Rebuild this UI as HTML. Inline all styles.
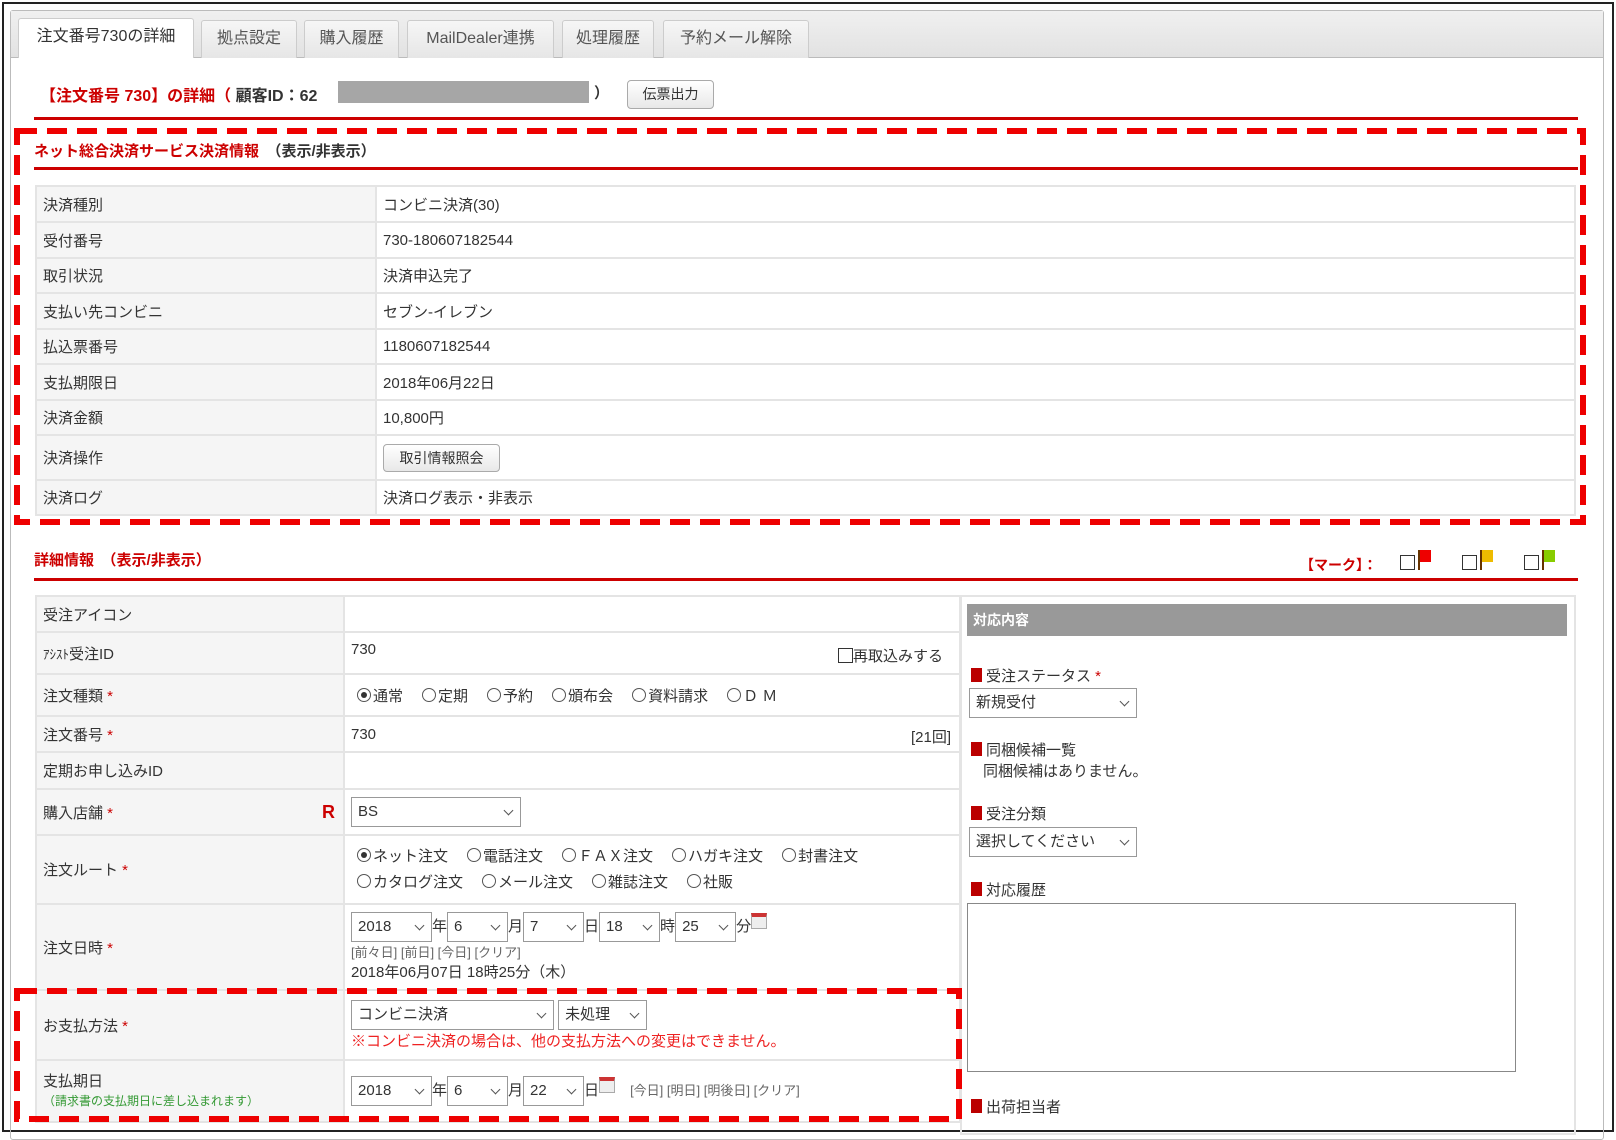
<!DOCTYPE html><html><head><meta charset="utf-8"><style>
*{margin:0;padding:0;box-sizing:border-box}
body{width:1616px;height:1125px;background:#fff;position:relative;overflow:hidden;font-family:"Liberation Sans","Noto Sans CJK JP",sans-serif;font-size:15px;color:#333}
.a{position:absolute;white-space:nowrap}
.frame{left:2px;top:2px;width:1612px;height:1130px;border:2px solid #222}
.inner{left:10px;top:10px;width:1594px;height:1130px;border:1px solid #bbb;border-radius:3px}
.tabbar{left:11px;top:11px;width:1592px;height:47px;background:linear-gradient(#f0f0f0,#e2e2e2);border-bottom:1px solid #bbb}
.tab{position:absolute;top:20px;height:38px;border:1px solid #ccc;border-bottom:none;background:linear-gradient(#f6f6f6,#e6e6e6);border-radius:3px 3px 0 0;text-align:center;line-height:36px;font-size:16px;color:#555}
.tab.on{background:#fff;height:40px;top:18px;color:#333}
.red{color:#c00}
.rl{height:3px;background:#c00}
table{border-collapse:collapse;position:absolute}
td{border:2px solid #e4e4e4;padding:0 6px;font-size:15px;vertical-align:middle}
td.l{background:#f5f5f5}
.sel{display:inline-block;border:1px solid #999;height:30px;line-height:28px;padding:0 6px;font-size:15px;background:#fff;position:relative;vertical-align:middle}
.sel:after{content:"";position:absolute;right:8px;top:9px;width:6px;height:6px;border-right:1px solid #555;border-bottom:1px solid #555;transform:rotate(45deg)}
.rd{display:inline-block;width:14px;height:14px;border:1px solid #555;border-radius:50%;vertical-align:-1px;margin-right:2px;position:relative}
.rd.on:after{content:"";position:absolute;left:3px;top:3px;width:6px;height:6px;border-radius:50%;background:#333}
.cb{display:inline-block;width:15px;height:15px;border:1px solid #333;vertical-align:-2px}
.st{color:#c00}
.sq{display:inline-block;width:11px;height:14px;background:#b00;margin-right:4px;vertical-align:-1px}
.cal{display:inline-block;width:16px;height:16px;border:1px solid #aaa;border-top:4px solid #c33;background:#eee;vertical-align:2px}
.sm{font-size:13px;color:#666}
.btn{border:1px solid #aaa;border-radius:4px;background:linear-gradient(#fff,#e8e8e8);font-size:14px;text-align:center}
.g{margin-right:19px}
.fl{display:inline-block;width:13px;height:20px;border-left:2px solid #630;vertical-align:-2px;position:relative;margin-left:3px}
.fl i{position:absolute;left:0;top:0;width:11px;height:12px}
</style></head><body>
<div class="a frame"></div>
<div class="a inner"></div>
<div class="a tabbar"></div>
<div class="a tab on" style="left:18px;width:176px">注文番号730の詳細</div>
<div class="a tab" style="left:201px;width:96px">拠点設定</div>
<div class="a tab" style="left:304px;width:95px">購入履歴</div>
<div class="a tab" style="left:407px;width:147px">MailDealer連携</div>
<div class="a tab" style="left:562px;width:92px">処理履歴</div>
<div class="a tab" style="left:663px;width:146px">予約メール解除</div>

<div class="a" style="left:40px;top:82px;font-weight:bold;font-size:16px"><span class="red">【注文番号 730】の詳細（</span> 顧客ID：62</div>
<div class="a" style="left:338px;top:81px;width:251px;height:22px;background:#a6a6a6"></div>
<div class="a" style="left:594px;top:82px;font-weight:bold">）</div>
<div class="a btn" style="left:627px;top:80px;width:87px;height:29px;line-height:27px">伝票出力</div>
<div class="a rl" style="left:34px;top:117px;width:1544px"></div>

<div class="a" style="left:34px;top:140px;font-weight:bold;font-size:15px"><span class="red">ネット総合決済サービス決済情報</span>　（表示/非表示）</div>
<div class="a rl" style="left:34px;top:167px;width:1544px"></div>
<table style="left:35px;top:185px;width:1541px">
<col style="width:340px"><col>
<tr style="height:36px"><td class="l">決済種別</td><td>コンビニ決済(30)</td></tr>
<tr style="height:36px"><td class="l">受付番号</td><td>730-180607182544</td></tr>
<tr style="height:35px"><td class="l">取引状況</td><td>決済申込完了</td></tr>
<tr style="height:36px"><td class="l">支払い先コンビニ</td><td>セブン-イレブン</td></tr>
<tr style="height:35px"><td class="l">払込票番号</td><td>1180607182544</td></tr>
<tr style="height:36px"><td class="l">支払期限日</td><td>2018年06月22日</td></tr>
<tr style="height:35px"><td class="l">決済金額</td><td>10,800円</td></tr>
<tr style="height:45px"><td class="l">決済操作</td><td><span class="btn" style="display:inline-block;width:117px;height:28px;line-height:26px">取引情報照会</span></td></tr>
<tr style="height:35px"><td class="l">決済ログ</td><td>決済ログ表示・非表示</td></tr>
</table>

<div class="a" style="left:34px;top:549px;font-weight:bold;font-size:15px"><span class="red">詳細情報</span>　<span class="red">（表示/非表示）</span></div>
<div class="a" style="left:1300px;top:555px;font-weight:bold;font-size:14px"><span class="red">【マーク】：</span></div>
<div class="a" style="left:1400px;top:550px"><span class="cb"></span><span class="fl"><i style="background:#e00"></i></span></div>
<div class="a" style="left:1462px;top:550px"><span class="cb"></span><span class="fl"><i style="background:#eb0"></i></span></div>
<div class="a" style="left:1524px;top:550px"><span class="cb"></span><span class="fl"><i style="background:#8c0"></i></span></div>
<div class="a rl" style="left:34px;top:578px;width:1544px"></div>

<table style="left:35px;top:595px;width:926px">
<col style="width:308px"><col>
<tr style="height:36px"><td class="l">受注アイコン</td><td></td></tr>
<tr style="height:42px"><td class="l"><span style="font-size:13px">ｱｼｽﾄ</span>受注ID</td><td style="position:relative"><span style="position:relative;top:-4px">730</span><span style="position:absolute;right:16px;top:12px"><span class="cb"></span>再取込みする</span></td></tr>
<tr style="height:42px"><td class="l">注文種類 <span class="st">*</span></td><td style="padding-left:12px"><span class="g"><span class="rd on"></span>通常</span><span class="g"><span class="rd"></span>定期</span><span class="g"><span class="rd"></span>予約</span><span class="g"><span class="rd"></span>頒布会</span><span class="g"><span class="rd"></span>資料請求</span><span><span class="rd"></span>Ｄ Ｍ</span></td></tr>
<tr style="height:36px"><td class="l">注文番号 <span class="st">*</span></td><td style="position:relative">730<span style="position:absolute;right:8px">[21回]</span></td></tr>
<tr style="height:37px"><td class="l">定期お申し込みID</td><td></td></tr>
<tr style="height:46px"><td class="l" style="position:relative">購入店舗 <span class="st">*</span><span style="position:absolute;right:8px;top:12px;color:#c00;font-weight:bold;font-size:18px">R</span></td><td><span class="sel" style="width:170px">BS</span></td></tr>
<tr style="height:69px"><td class="l">注文ルート <span class="st">*</span></td><td style="padding-left:12px;line-height:26px"><span class="g"><span class="rd on"></span>ネット注文</span><span class="g"><span class="rd"></span>電話注文</span><span class="g"><span class="rd"></span>ＦＡＸ注文</span><span class="g"><span class="rd"></span>ハガキ注文</span><span><span class="rd"></span>封書注文</span><br><span class="g"><span class="rd"></span>カタログ注文</span><span class="g"><span class="rd"></span>メール注文</span><span class="g"><span class="rd"></span>雑誌注文</span><span><span class="rd"></span>社販</span></td></tr>
<tr style="height:86px"><td class="l">注文日時 <span class="st">*</span></td><td><span class="sel" style="width:81px">2018</span>年<span class="sel" style="width:61px">6</span>月<span class="sel" style="width:61px">7</span>日<span class="sel" style="width:61px">18</span>時<span class="sel" style="width:61px">25</span>分<span class="cal"></span><div class="sm">[前々日] [前日] [今日] [クリア]</div><div>2018年06月07日 18時25分（木）</div></td></tr>
<tr style="height:70px"><td class="l">お支払方法 <span class="st">*</span></td><td><span class="sel" style="width:203px">コンビニ決済</span> <span class="sel" style="width:89px">未処理</span><div style="color:#e22">※コンビニ決済の場合は、他の支払方法への変更はできません。</div></td></tr>
<tr style="height:62px"><td class="l" style="line-height:19px">支払期日<br><span style="font-size:12px;color:#393">（請求書の支払期日に差し込まれます）</span></td><td><span class="sel" style="width:81px">2018</span>年<span class="sel" style="width:61px">6</span>月<span class="sel" style="width:61px">22</span>日<span class="cal"></span>　<span class="sm">[今日] [明日] [明後日] [クリア]</span></td></tr>
</table>
<div class="a" style="left:960px;top:595px;width:616px;height:540px;border:2px solid #e4e4e4"></div>
<div class="a" style="left:967px;top:604px;width:600px;height:32px;background:#999;color:#fff;font-weight:bold;font-size:14px;line-height:32px;padding-left:6px">対応内容</div>
<div class="a" style="left:971px;top:665px"><span class="sq"></span>受注ステータス <span class="st">*</span></div>
<div class="sel" style="position:absolute;left:969px;top:688px;width:168px;height:30px">新規受付</div>
<div class="a" style="left:971px;top:739px"><span class="sq"></span>同梱候補一覧</div>
<div class="a" style="left:983px;top:760px">同梱候補はありません。</div>
<div class="a" style="left:971px;top:803px"><span class="sq"></span>受注分類</div>
<div class="sel" style="position:absolute;left:969px;top:827px;width:168px;height:30px;white-space:nowrap">選択してください</div>
<div class="a" style="left:971px;top:879px"><span class="sq"></span>対応履歴</div>
<div class="a" style="left:967px;top:903px;width:549px;height:169px;border:1px solid #888"></div>
<div class="a" style="left:971px;top:1096px"><span class="sq"></span>出荷担当者</div>

<svg class="a" style="left:0;top:0" width="1616" height="1125">
<g fill="none" stroke="#e00" stroke-width="6" stroke-dasharray="20 10">
<rect x="17" y="131" width="1566" height="391"/>
<rect x="17" y="991" width="942" height="128"/>
</g>
</svg>
</body></html>
